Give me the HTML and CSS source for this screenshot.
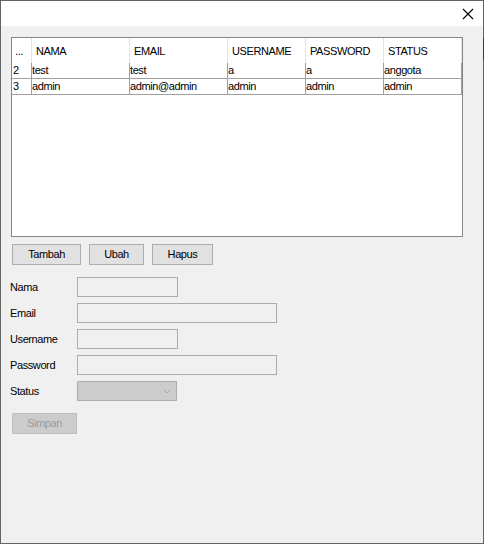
FILE: index.html
```html
<!DOCTYPE html>
<html>
<head>
<meta charset="utf-8">
<link rel="stylesheet" href="styles.css">
</head>
<body>
<div class="window">
  <div class="titlebar">
    <svg class="close" width="12" height="12" viewBox="0 0 12 12"><path d="M1 1 L11 11 M11 1 L1 11" stroke="#000" stroke-width="1.1" fill="none"/></svg>
  </div>
  <div class="client">
    <div class="grid">
      <div class="row head">
        <div class="cell c0">...</div>
        <div class="cell c1">NAMA</div>
        <div class="cell c2">EMAIL</div>
        <div class="cell c3">USERNAME</div>
        <div class="cell c4">PASSWORD</div>
        <div class="cell c5">STATUS</div>
      </div>
      <div class="row data">
        <div class="cell c0">2</div>
        <div class="cell c1">test</div>
        <div class="cell c2">test</div>
        <div class="cell c3">a</div>
        <div class="cell c4">a</div>
        <div class="cell c5">anggota</div>
      </div>
      <div class="row data">
        <div class="cell c0">3</div>
        <div class="cell c1">admin</div>
        <div class="cell c2">admin@admin</div>
        <div class="cell c3">admin</div>
        <div class="cell c4">admin</div>
        <div class="cell c5">admin</div>
      </div>
    </div>
    <div class="actions">
      <div class="btn w-tambah">Tambah</div>
      <div class="btn w-ubah">Ubah</div>
      <div class="btn w-hapus">Hapus</div>
    </div>
    <div class="form">
      <div class="field"><span class="label">Nama</span><span class="input short"></span></div>
      <div class="field"><span class="label">Email</span><span class="input long"></span></div>
      <div class="field"><span class="label">Username</span><span class="input short"></span></div>
      <div class="field"><span class="label">Password</span><span class="input long"></span></div>
      <div class="field"><span class="label">Status</span><span class="combo"><svg class="chev" width="8" height="5" viewBox="0 0 8 5"><path d="M0.5 0.5 L4 4 L7.5 0.5" stroke="#a8a8a8" stroke-width="1" fill="none"/></svg></span></div>
    </div>
    <div class="btn disabled">Simpan</div>
  </div>
  <div class="edge-mark"></div>
</div>
</body>
</html>
```

FILE: styles.css
```css
html, body {
  margin: 0;
  padding: 0;
}
body {
  font-family: "Liberation Sans", Arial, sans-serif;
  font-size: 11px;
  letter-spacing: -0.4px;
  color: #000;
}
.window {
  position: relative;
  width: 484px;
  height: 544px;
  box-sizing: border-box;
  border: 1px solid #646464;
  display: flex;
  flex-direction: column;
  background: #f0f0f0;
}
.titlebar {
  height: 25px;
  background: #fff;
  display: flex;
  justify-content: flex-end;
  align-items: flex-start;
  flex-shrink: 0;
}
.close {
  margin-top: 7px;
  margin-right: 9px;
}
.client {
  flex: 1;
  padding: 11px 0 0 9px;
  display: flex;
  flex-direction: column;
  align-items: flex-start;
}
.grid {
  width: 452px;
  height: 200px;
  margin-left: 1px;
  box-sizing: border-box;
  border: 1px solid #828790;
  background: #fff;
  display: flex;
  flex-direction: column;
}
.row {
  display: flex;
}
.cell {
  box-sizing: border-box;
  white-space: nowrap;
  overflow: hidden;
}
.c0 { width: 20px; }
.c1 { width: 98px; }
.c2 { width: 98px; }
.c3 { width: 78px; }
.c4 { width: 78px; }
.c5 { width: 78px; }
.head {
  height: 25px;
}
.head .cell {
  border-right: 1px solid #e5e5e5;
  padding: 1px 0 0 4px;
  line-height: 24px;
}
.head .c0 {
  padding-left: 3px;
}
.data {
  height: 16px;
}
.data .cell {
  border-right: 1px solid #a0a0a0;
  border-bottom: 1px solid #a0a0a0;
  line-height: 15px;
  padding-left: 0;
}
.data .c0 {
  padding-left: 1px;
}
.actions {
  display: flex;
  gap: 8px;
  margin: 7px 0 0 2px;
}
.btn {
  box-sizing: border-box;
  height: 21px;
  line-height: 19px;
  text-align: center;
  background: #e1e1e1;
  border: 1px solid #adadad;
}
.w-tambah { width: 69px; }
.w-ubah { width: 55px; }
.w-hapus { width: 61px; }
.form {
  display: flex;
  flex-direction: column;
  gap: 6px;
  margin-top: 12px;
}
.field {
  display: flex;
  align-items: center;
  height: 20px;
}
.label {
  width: 67px;
}
.input {
  box-sizing: border-box;
  height: 20px;
  border: 1px solid #acacac;
  background: #f0f0f0;
}
.short { width: 101px; }
.long { width: 200px; }
.combo {
  box-sizing: border-box;
  width: 100px;
  height: 20px;
  border: 1px solid #adadad;
  background: #cccccc;
  display: flex;
  justify-content: flex-end;
  align-items: center;
}
.chev {
  margin-right: 5px;
  margin-top: 1px;
}
.btn.disabled {
  width: 65px;
  margin: 12px 0 0 2px;
  background: #cccccc;
  border-color: #bfbfbf;
  color: #9a9a9a;
}
.edge-mark {
  position: absolute;
  right: -1px;
  top: 37px;
  width: 1px;
  height: 22px;
  background: #3c3c3c;
}
```
